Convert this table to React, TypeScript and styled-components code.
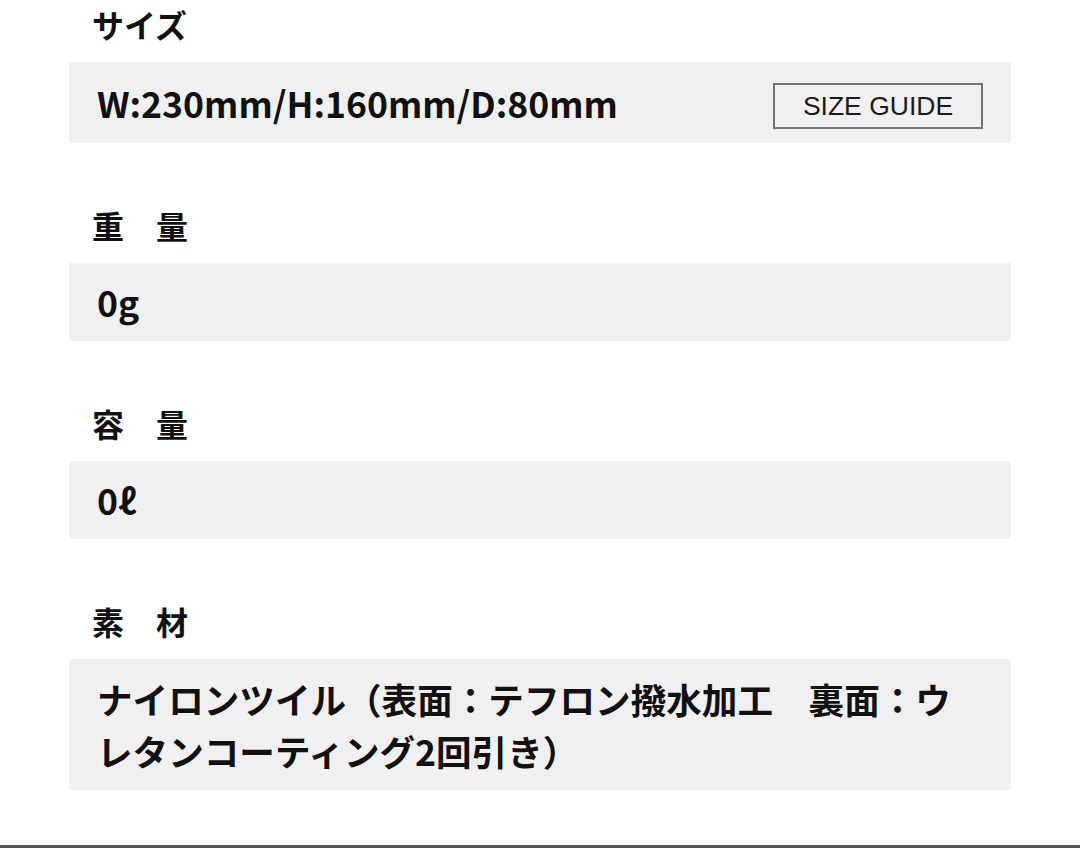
import React from "react";
import styled, { createGlobalStyle } from "styled-components";

const GlobalStyle = createGlobalStyle`
  html, body { margin: 0; padding: 0; background: #ffffff; }
  body {
    font-family: "Noto Sans CJK JP", "Noto Sans", sans-serif;
    color: #111111;
  }
`;

const Page = styled.main`
  padding: 2px 69px 0;
  display: flex;
  flex-direction: column;
  gap: 60px;
`;

const Section = styled.section`
  display: flex;
  flex-direction: column;
  gap: 16px;
`;

const Label = styled.h3`
  margin: 0 0 0 23px;
  font-size: 32px;
  line-height: 44px;
  font-weight: 700;
  color: #111111;
`;

const Box = styled.div`
  background: #f0f0f0;
  padding: 14px 28px;
  display: flex;
  align-items: center;
  justify-content: space-between;
`;

const Value = styled.p<{ $lh?: number }>`
  margin: 0;
  font-size: 35.6px;
  line-height: ${(p) => p.$lh ?? 50}px;
  font-weight: 700;
  color: #111111;
`;

const GuideButton = styled.button`
  box-sizing: border-box;
  width: 210px;
  height: 46px;
  margin-top: 7px;
  border: 2px solid #737373;
  background: transparent;
  font-family: "Liberation Sans", Arial, sans-serif;
  font-size: 26.5px;
  color: #1a1a1a;
  padding: 0;
  cursor: pointer;
`;

const Footer = styled.div`
  margin-top: 55px;
  border-top: 3px solid #555555;
`;

export default function App() {
  return (
    <>
      <GlobalStyle />
      <Page>
        <Section>
          <Label>サイズ</Label>
          <Box>
            <Value>W:230mm/H:160mm/D:80mm</Value>
            <GuideButton>SIZE GUIDE</GuideButton>
          </Box>
        </Section>
        <Section>
          <Label>重　量</Label>
          <Box>
            <Value>0g</Value>
          </Box>
        </Section>
        <Section>
          <Label>容　量</Label>
          <Box>
            <Value>0ℓ</Value>
          </Box>
        </Section>
        <Section>
          <Label>素　材</Label>
          <Box>
            <Value $lh={51.5}>
              ナイロンツイル（表面：テフロン撥水加工　裏面：ウレタンコーティング2回引き）
            </Value>
          </Box>
        </Section>
      </Page>
      <Footer />
    </>
  );
}
